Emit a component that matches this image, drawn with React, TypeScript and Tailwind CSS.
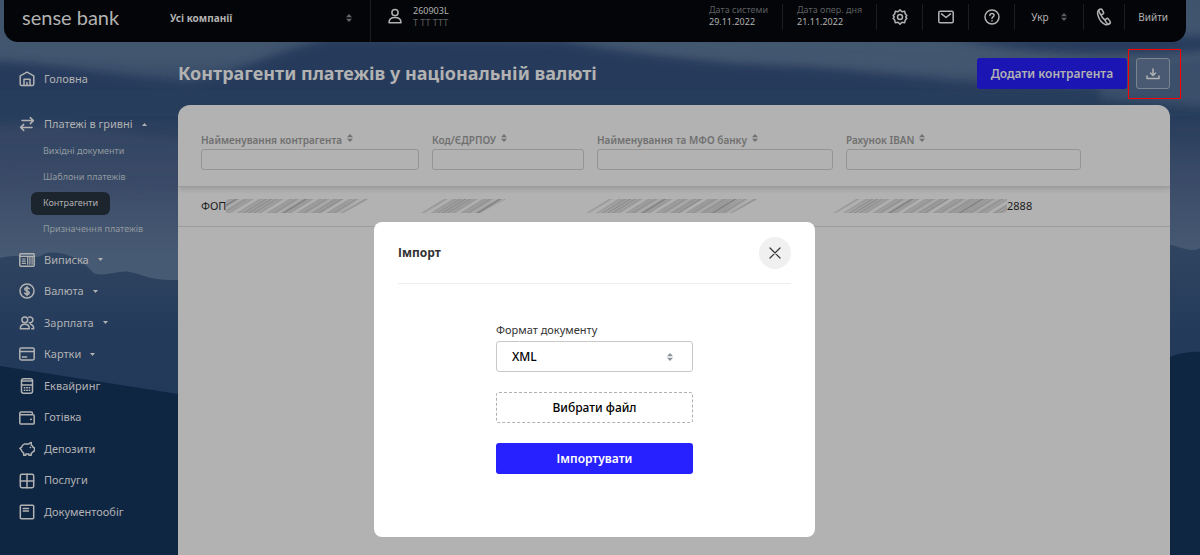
import React, { useState } from 'react';
import clsx from 'clsx';

interface IconProps {
  children: React.ReactNode;
  className?: string;
  viewBox?: string;
}

const Icon: React.FC<IconProps> = ({ children, className = 'size-4', viewBox = '0 0 16 16' }) => (
  <svg
    className={clsx('shrink-0', className)}
    viewBox={viewBox}
    fill="none"
    stroke="currentColor"
    strokeWidth="1.5"
    strokeLinecap="round"
    strokeLinejoin="round"
    aria-hidden="true"
  >
    {children}
  </svg>
);

const SortArrows: React.FC<{ className?: string }> = ({ className }) => (
  <svg className={clsx('h-2 w-[6px] shrink-0', className)} viewBox="0 0 6 8" fill="currentColor" aria-hidden="true">
    <path d="M3 0 6 3.3H0ZM3 8 0 4.7H6Z" />
  </svg>
);

interface NavItem {
  label: string;
  icon: React.ReactNode;
  hasMenu?: boolean;
}

const homeIcon = (
  <>
    <path d="M1.2 4.8 8 1.2l6.8 3.6v8.100a1.6 1.6 0 0 1-1.600 1.600H2.800a1.600 1.600 0 0 1-1.600-1.600Z" />
    <path d="M5 14.500V8.300h6v6.200M8 14.500v-3" />
  </>
);

const transferIcon = (
  <>
    <path d="M3 4.600h11M11.300 1.600l3 3-3 3M13 11.400H2M4.700 8.400l-3 3 3 3" />
  </>
);

const navItems: NavItem[] = [
  {
    label: 'Виписка',
    hasMenu: true,
    icon: (
      <>
        <rect x=".8" y="1.800" width="14.400" height="12.400" rx="1" />
        <path d="M.8 4.400h14.400M3.300 7h3M3.300 9.200h3M3.300 11.400h3M8.700 4.400v7.800M10.900 4.400v7.800M13.100 4.400v7.800" strokeWidth="1.200" />
      </>
    ),
  },
  {
    label: 'Валюта',
    hasMenu: true,
    icon: (
      <>
        <circle cx="8" cy="8" r="7" />
        <path d="M10.200 5.800C9.800 5 9 4.700 8 4.700c-1.300 0-2.200.6-2.200 1.600 0 2.300 4.400 1.100 4.400 3.400 0 1-.9 1.600-2.200 1.600-1.100 0-1.900-.4-2.300-1.200M8 3.500v9" />
      </>
    ),
  },
  {
    label: 'Зарплата',
    hasMenu: true,
    icon: (
      <>
        <circle cx="5.800" cy="4.800" r="2.900" />
        <path d="M1.300 13.700c0-2.900 1.800-4.500 4.500-4.500s4.500 1.600 4.500 4.500ZM9.800 2.200a2.900 2.900 0 1 1 .4 5.400M11.500 9.300c2 .5 3.200 2 3.200 4.400h-2" />
      </>
    ),
  },
  {
    label: 'Картки',
    hasMenu: true,
    icon: (
      <>
        <rect x=".8" y="2" width="14.400" height="12" rx="1.400" />
        <path d="M.8 5.600h14.400M3.400 11h4.200" />
      </>
    ),
  },
  {
    label: 'Еквайринг',
    icon: (
      <>
        <rect x="2.500" y=".8" width="11" height="14.400" rx="2" />
        <path d="M2.500 3h11M2.500 7h11M5.300 9.700h.6M7.700 9.700h.6M10.100 9.700h.6M5.300 12.300h.6M7.700 12.300h.6M10.100 12.300h.6" />
      </>
    ),
  },
  {
    label: 'Готівка',
    icon: (
      <>
        <path d="M.8 4.800v8a1.300 1.300 0 0 0 1.300 1.300h12a1.100 1.100 0 0 0 1.100-1.100V5.900a1.100 1.100 0 0 0-1.100-1.100H.8V3.100A1.300 1.300 0 0 1 2.100 1.900h10.100a1.200 1.200 0 0 1 1.200 1.200v1.700" />
        <path d="M11.800 9.300h.3" strokeWidth="1.800" />
      </>
    ),
  },
  {
    label: 'Депозити',
    icon: (
      <>
        <path d="M5.200 3.100h4.500c.8-1 1.700-1.600 2.600-1.600l-.1 2.400c.9.600 1.600 1.500 1.900 2.400l1.400.6v3l-1.700.9c-.4.700-1 1.200-1.600 1.500v1.900H9.900v-1.300H6.800v1.300H4.700v-2.100C3.300 11.300 2.500 10.100 2.200 8.700L.8 7.300l1.600-.9c.5-1.500 1.500-2.700 2.800-3.300Z" />
        <path d="M11.300 6.500h.2" strokeWidth="1.600" />
      </>
    ),
  },
  {
    label: 'Послуги',
    icon: (
      <>
        <rect x="1.300" y="1.300" width="13.400" height="13.400" rx="1.600" />
        <path d="M8 1.300v13.400M1.300 8h13.400" />
      </>
    ),
  },
  {
    label: 'Документообіг',
    icon: (
      <>
        <rect x="1.300" y="1.300" width="13.400" height="13.400" rx="1" />
        <path d="M4.200 4.600h5.300M4.200 7h5.300" />
      </>
    ),
  },
];

const paymentLinks = ['Вихідні документи', 'Шаблони платежів', 'Контрагенти', 'Призначення платежів'];

const columns = [
  { id: 'name', label: 'Найменування контрагента', width: 'w-[248px]' },
  { id: 'code', label: 'Код/ЄДРПОУ', width: 'w-[165px]' },
  { id: 'bank', label: 'Найменування та МФО банку', width: 'w-[249px]' },
  { id: 'iban', label: 'Рахунок IBAN', width: 'w-[248px]' },
];

// Misty mountain layers behind the whole page
const Landscape: React.FC = () => (
  <svg
    className="absolute inset-0 size-full"
    viewBox="0 0 1200 555"
    preserveAspectRatio="none"
    aria-hidden="true"
  >
    <defs>
      <linearGradient id="sky" x1="0" y1="0" x2="0" y2="1">
        <stop offset="0" stopColor="#3f536d" />
        <stop offset=".1" stopColor="#43566f" />
        <stop offset=".2" stopColor="#2b4060" />
        <stop offset=".33" stopColor="#3b4c68" />
        <stop offset=".46" stopColor="#475a73" />
        <stop offset="1" stopColor="#475a73" />
      </linearGradient>
      <linearGradient id="cloud" x1="0" y1="0" x2="0" y2="1">
        <stop offset="0" stopColor="#253a5b" />
        <stop offset=".55" stopColor="#273c5c" />
        <stop offset="1" stopColor="#364864" stopOpacity="0" />
      </linearGradient>
      <linearGradient id="ridge" x1="0" y1="0" x2="0" y2="1">
        <stop offset="0" stopColor="#304560" />
        <stop offset=".3" stopColor="#233a5b" />
        <stop offset="1" stopColor="#1f3858" />
      </linearGradient>
      <filter id="soft" x="-10%" y="-30%" width="120%" height="160%">
        <feGaussianBlur stdDeviation="5" />
      </filter>
    </defs>
    <rect width="1200" height="555" fill="url(#sky)" />
    <g filter="url(#soft)">
      <path d="M-20 60C60 64 120 76 190 82 240 72 270 52 330 38L560 40C620 52 680 58 740 64 860 68 920 80 980 84L1220 92V180H-20Z" fill="url(#cloud)" />
      <path d="M540 30C640 52 700 56 780 62 860 62 930 76 1010 72L960 40Z" fill="#43566f" />
      <path d="M950 38C1010 50 1080 60 1220 50V36Z" fill="#273b5b" />
      <path d="M1100 66 1220 60V108L1100 98Z" fill="#3b4f6b" />
      <path d="M-20 130C60 112 130 140 190 138V190C120 196 60 176-20 170Z" fill="#394966" opacity=".6" />
    </g>
    <path
      d="M0 258C22 252 34 262 44 254 56 250 72 255 80 262 88 264 90 272 96 274 108 276 118 270 130 272 142 274 150 281 178 280L1150 248C1170 236 1185 256 1200 248V555H0Z"
      fill="url(#ridge)"
    />
    <path d="M0 366 178 394 1100 394C1140 372 1170 350 1200 352V555H0Z" fill="#0f2643" />
  </svg>
);

const Smear: React.FC<{ id: string; width: number; className?: string; flatStart?: boolean; flatEnd?: boolean }> = ({
  id,
  width,
  className,
  flatStart = false,
  flatEnd = false,
}) => {
  const streaks = Array.from({ length: Math.ceil((width + 30) / 5) }, (_, i) => i);
  return (
    <svg
      className={clsx('inline-block h-[14px] shrink-0 align-middle', className)}
      style={{ width }}
      viewBox={`0 0 ${width} 14`}
      aria-hidden="true"
    >
      <defs>
        <filter id={`${id}-blur`}>
          <feGaussianBlur stdDeviation=".7" />
        </filter>
        <linearGradient id={`${id}-fade`}>
          <stop offset="0" stopColor="#a4a4a4" stopOpacity={flatStart ? 1 : 0.3} />
          <stop offset=".2" stopColor="#a2a2a2" />
          <stop offset=".8" stopColor="#9e9e9e" />
          <stop offset="1" stopColor="#a4a4a4" stopOpacity={flatEnd ? 1 : 0.3} />
        </linearGradient>
        <clipPath id={id}>
          <path d={`M${flatStart ? 0 : 24} 0H${width}L${flatEnd ? width : width - 26} 14H0Z`} />
        </clipPath>
      </defs>
      <g clipPath={`url(#${id})`}>
        <rect width={width} height="14" fill={`url(#${id}-fade)`} />
        <g filter={`url(#${id}-blur)`}>
          {streaks.map((i) => (
            <path
              key={i}
              d={`M${i * 5 - 24} 15 ${i * 5 + 2} -1`}
              stroke={i % 7 === 2 ? '#858585' : i % 3 === 0 ? '#b2b2b2' : '#949494'}
              strokeWidth={i % 2 ? 1 : 2}
            />
          ))}
        </g>
      </g>
    </svg>
  );
};

const Header: React.FC = () => (
  <header className="relative mr-[14px] ml-1 flex h-[42px] rounded-b-[14px] bg-[#030508] text-[#b2b2b2]">
    <a href="#" className="w-[158px] pl-[18px] font-['Lato'] text-[20px] leading-[34px]">
      sense bank
    </a>
    <label className="relative flex h-9 w-[208px] items-center">
      <span className="sr-only">Компанія</span>
      <select className="h-9 w-full appearance-none bg-transparent pl-2 text-[10px] font-bold">
        <option>Усі компанії</option>
      </select>
      <SortArrows className="pointer-events-none absolute right-[18px] text-[#666]" />
    </label>
    <div className="flex flex-1 border-l border-[#1b1d20] pl-4">
      <Icon className="mt-2 size-4">
        <circle cx="8" cy="4.600" r="3.100" />
        <path d="M2 14.800c0-3.300 2.200-5.200 6-5.200s6 1.900 6 5.200Z" />
      </Icon>
      <div className="ml-[10px] pt-[5px] text-[9px] leading-3">
        <div>260903L</div>
        <div className="text-[#5d5e60]">Т ТТ ТТТ</div>
      </div>
    </div>
    <div className="my-1 flex h-[26px] divide-x divide-[#1b1d20]">
      <div className="pr-[14px] text-[9px] leading-3">
        <div className="text-[#5d5e60]">Дата системи</div>
        <div>29.11.2022</div>
      </div>
      <div className="px-[14px] text-[9px] leading-3">
        <div className="text-[#5d5e60]">Дата опер. дня</div>
        <div>21.11.2022</div>
      </div>
      <button type="button" aria-label="Налаштування" className="flex w-[46px] items-center justify-center">
        <Icon>
          <path d="M8 .9 10 2.800l2.700-.5.6 2.700 1.500 1.500L13.800 8l1 1.500-1.500 1.500-.6 2.700-2.700-.5L8 15.100l-2-1.900-2.700.5L2.700 11 1.200 9.500l1-1.500-1-1.500L2.700 5l.6-2.700 2.700.5Z" />
          <circle cx="8" cy="8" r="2.500" />
        </Icon>
      </button>
      <button type="button" aria-label="Повідомлення" className="flex w-[46px] items-center justify-center">
        <Icon>
          <rect x=".8" y="2.200" width="14.400" height="11.600" rx="1.300" />
          <path d="m3.500 4.900 4.500 3.600 4.500-3.600" />
        </Icon>
      </button>
      <button type="button" aria-label="Допомога" className="flex w-[46px] items-center justify-center">
        <Icon>
          <circle cx="8" cy="8" r="7" />
          <path d="M5.900 6.500C5.900 5.200 6.700 4.400 8 4.400s2.100.8 2.100 1.900c0 1.600-2.100 1.700-2.100 3.200M8 11.800v.1" />
        </Icon>
      </button>
      <label className="relative flex w-[69px] items-center">
        <span className="sr-only">Мова</span>
        <select className="h-full w-full appearance-none bg-transparent pl-4 text-[10px]">
          <option>Укр</option>
        </select>
        <SortArrows className="pointer-events-none absolute right-4 text-[#5d5e60]" />
      </label>
      <button type="button" aria-label="Зателефонувати" className="flex w-[41px] items-center justify-center">
        <Icon className="size-[18px]" viewBox="0 0 18 18">
          <path d="M5 1.400C2.600 2.200 2.200 5 3.200 8c1.200 3.700 3.900 7.200 7 8.500 1.900.7 3.400.3 4.800-1.200" />
          <rect x="4.400" y="1" width="3.600" height="5.600" rx="1.500" transform="rotate(-28 6.200 3.800)" />
          <rect x="11" y="10.400" width="3.600" height="5.800" rx="1.500" transform="rotate(-36 12.800 13.300)" />
          <path d="M6 6.800c.6 2.100 2 4 3.900 5.200" />
        </Icon>
      </button>
      <button type="button" className="pr-[18px] pl-[13px] text-[10px]">
        Вийти
      </button>
    </div>
  </header>
);

const Sidebar: React.FC = () => (
  <nav className="w-[178px] shrink-0 pt-[21px] pl-[19px] text-[11px] text-[#b2b2b2]">
    <a href="#" className="flex h-8 items-center gap-[9px]">
      <Icon>{homeIcon}</Icon>
      Головна
    </a>
    <a href="#" className="mt-[14px] flex h-[30px] items-center gap-[9px]">
      <Icon>{transferIcon}</Icon>
      Платежі в гривні
      <svg className="h-[3px] w-[5px]" viewBox="0 0 5 3" fill="currentColor" aria-hidden="true">
        <path d="M0 3h5L2.500 0Z" />
      </svg>
    </a>
    <ul className="-mt-[1px] ml-3 text-[9px] text-[#92999f]">
      {paymentLinks.map((label) => (
        <li key={label} className="flex h-[26px] items-center">
          <a
            href="#"
            className={clsx(
              'flex h-[23px] items-center rounded-md px-3',
              label === 'Контрагенти' && 'bg-[#1c242e] text-[#b2b2b2]'
            )}
          >
            {label}
          </a>
        </li>
      ))}
    </ul>
    <ul className="mt-[2px] grid min-h-[284px] auto-rows-fr">
      {navItems.map((item) => (
        <li key={item.label} className="flex">
          <a href="#" className="flex items-center gap-[9px]">
            <Icon>{item.icon}</Icon>
            {item.label}
            {item.hasMenu && (
              <svg className="h-[3px] w-[5px]" viewBox="0 0 5 3" fill="currentColor" aria-hidden="true">
                <path d="M0 0h5L2.500 3Z" />
              </svg>
            )}
          </a>
        </li>
      ))}
    </ul>
  </nav>
);

const CounterpartyTable: React.FC = () => (
  <table className="w-full table-fixed text-left text-[11px]">
    <thead className="shadow-[0_2px_6px_rgba(0,0,0,0.18)]">
      <tr className="h-[81px] border-b border-[#9c9c9c]">
        {columns.map((column) => (
          <th
            key={column.id}
            className={clsx(
              column.width,
              'pt-[26px] pr-[7px] pl-[6px] align-top text-[10px] font-semibold text-[#707070] first:pl-[23px]'
            )}
          >
            <label htmlFor={column.id} className="flex h-[18px] items-center gap-[5px]">
              {column.label}
              <SortArrows className="mb-1" />
            </label>
            <input id={column.id} type="text" className="block h-[21px] w-full rounded-[3px] border border-[#959595] px-2" />
          </th>
        ))}
        <td />
      </tr>
    </thead>
    <tbody>
      <tr className="h-10 border-b border-[#9c9c9c] whitespace-nowrap text-[#1c1c1c]">
        <td className="pl-[23px]">
          <div className="flex items-center">
            ФОП
            <Smear id="smear-name" width={143} flatStart />
          </div>
        </td>
        <td className="pl-[6px]">
          <div className="-ml-3 flex items-center">
            <Smear id="smear-code" width={86} />
          </div>
        </td>
        <td className="pl-[6px]">
          <div className="-ml-3 flex items-center">
            <Smear id="smear-bank" width={173} />
          </div>
        </td>
        <td className="pl-[6px]">
          <div className="-ml-[14px] flex items-center">
            <Smear id="smear-iban" width={175} flatEnd />
            2888
          </div>
        </td>
        <td />
      </tr>
    </tbody>
  </table>
);

const ImportDialog: React.FC<{ onClose: () => void }> = ({ onClose }) => (
  <div className="absolute inset-x-0 top-[222px] flex justify-center pr-[11px]">
    <div
      role="dialog"
      aria-labelledby="import-title"
      className="w-[441px] rounded-lg bg-white px-6 pb-[63px] text-[#333]"
    >
      <div className="flex h-[62px] items-center justify-between border-b border-[#ededed]">
        <h2 id="import-title" className="text-[12px] font-bold">
          Імпорт
        </h2>
        <button
          type="button"
          aria-label="Закрити"
          onClick={onClose}
          className="flex size-8 items-center justify-center rounded-full bg-[#f0f0f0]"
        >
          <Icon className="size-3" viewBox="0 0 12 12">
            <path d="m1 1 10 10M11 1 1 11" strokeWidth="1.200" />
          </Icon>
        </button>
      </div>
      <form className="mx-auto flex w-[197px] flex-col pt-[37px]" onSubmit={(e) => e.preventDefault()}>
        <label htmlFor="format" className="mb-[3px] text-[11px] leading-[17px]">
          Формат документу
        </label>
        <div className="relative flex items-center">
          <select
            id="format"
            className="h-[31px] w-full appearance-none rounded-[3px] border border-[#c8c8c8] px-[15px] text-[12px] font-medium text-black"
          >
            <option>XML</option>
          </select>
          <SortArrows className="pointer-events-none absolute right-5 text-[#8a929c]" />
        </div>
        <button
          type="button"
          className="mt-5 h-[31px] rounded-[3px] border border-dashed border-[#b0b0b0] text-[12px] font-medium text-black"
        >
          Вибрати файл
        </button>
        <button type="submit" className="mt-5 h-[31px] rounded-[3px] bg-[#2720ff] text-[12px] font-semibold text-white">
          Імпортувати
        </button>
      </form>
    </div>
  </div>
);

export default function App() {
  const [importOpen, setImportOpen] = useState(true);

  return (
    <div className="relative flex min-h-screen flex-col overflow-hidden bg-[#0f2642] font-['Noto_Sans',sans-serif]">
      <Landscape />
      <Header />
      <div className="relative flex flex-1">
        <Sidebar />
        <main className="mr-[30px] flex min-w-0 flex-1 flex-col pt-4">
          <div className="mb-4 flex h-[31px] items-center">
            <h1 className="flex-1 text-[18px] font-bold text-[#b2b2b2]">Контрагенти платежів у національній валюті</h1>
            <button
              type="button"
              className="mr-[9px] h-[31px] w-[150px] rounded-[3px] bg-[#1b16b3] text-[12px] font-semibold text-[#b2b2b2]"
            >
              Додати контрагента
            </button>
            <div className="relative">
              <button
                type="button"
                aria-label="Імпорт"
                onClick={() => setImportOpen(true)}
                className="flex h-[31px] w-[34px] items-center justify-center rounded-[3px] border border-[#7b8592] bg-[#4a5a72] text-[#b2b2b2]"
              >
                <Icon className="size-[14px]" viewBox="0 0 14 14">
                  <path d="M7 2v6M4.500 6 7 8.500 9.500 6M1 9v2.500h12V9" />
                </Icon>
              </button>
              <div className="pointer-events-none absolute -top-[9px] -right-[11px] -bottom-[10px] -left-[8px] border border-[#ff0000]" />
            </div>
          </div>
          <div className="flex-1 overflow-hidden rounded-t-xl bg-[#b2b2b2]">
            <CounterpartyTable />
          </div>
        </main>
      </div>
      {importOpen && <ImportDialog onClose={() => setImportOpen(false)} />}
    </div>
  );
}
